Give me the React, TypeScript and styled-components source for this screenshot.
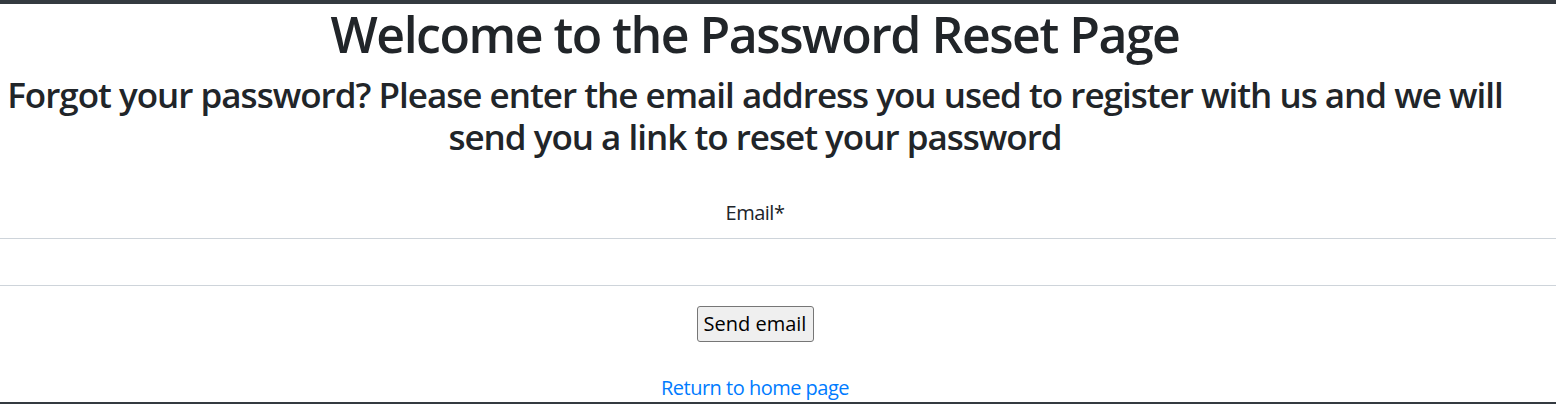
import React from "react";
import styled, { createGlobalStyle } from "styled-components";

const GlobalStyle = createGlobalStyle`
  html, body {
    margin: 0;
    padding: 0;
    background: #fff;
  }
  body {
    font-family: "Segoe UI", "Open Sans", "Noto Sans", Arial, sans-serif;
    font-size: 20px;
    line-height: 1.5;
    letter-spacing: -0.5px;
    color: #212529;
    overflow: hidden;
  }
  * { box-sizing: border-box; }
`;

const Page = styled.div`
  display: flex;
  flex-direction: column;
  height: 404px;
`;

const TopBar = styled.div`
  height: 4px;
  flex: none;
  background: #343a40;
`;

const Main = styled.main`
  width: 1510px;
  text-align: center;
  flex: 1;
`;

const Title = styled.h1`
  margin: 0 0 10px;
  font-size: 50px;
  font-weight: 600;
  line-height: 60px;
  letter-spacing: -1.5px;
`;

const Subtitle = styled.h2`
  margin: 0 0 10px;
  font-size: 35px;
  font-weight: 600;
  line-height: 42px;
  letter-spacing: -1px;
`;

const Form = styled.form`
  margin-top: 40px;
  display: flex;
  flex-direction: column;
  align-items: center;
`;

const Label = styled.label`
  display: block;
  margin-bottom: 10px;
  line-height: 30px;
`;

const Input = styled.input`
  display: block;
  width: 1556px;
  height: 48px;
  margin: 0;
  padding: 7px 15px;
  font: inherit;
  color: #495057;
  background: #fff;
  border: 1px solid #ced4da;
  border-left: none;
  border-right: none;
  outline: none;
  align-self: flex-start;
`;

const Button = styled.button`
  margin-top: 20px;
  width: 117px;
  height: 36px;
  padding: 0;
  font: inherit;
  line-height: 1;
  white-space: nowrap;
  color: #000;
  background: #efefef;
  border: 1px solid #767676;
  border-radius: 3px;
`;

const HomeLink = styled.a`
  display: inline-block;
  margin-top: 30px;
  padding-top: 2px;
  color: #007bff;
  text-decoration: none;
  line-height: 28px;
`;

const Footer = styled.footer`
  flex: none;
  height: 2px;
  background: #343a40;
`;

export default function App() {
  return (
    <>
      <GlobalStyle />
      <Page>
        <TopBar />
        <Main>
          <Title>Welcome to the Password Reset Page</Title>
          <Subtitle>
            Forgot your password? Please enter the email address you used to register with us and we will send you a link to reset your password
          </Subtitle>
          <Form onSubmit={(e) => e.preventDefault()}>
            <Label htmlFor="email">Email*</Label>
            <Input id="email" type="email" />
            <Button type="submit">Send email</Button>
            <HomeLink href="#">Return to home page</HomeLink>
          </Form>
        </Main>
        <Footer />
      </Page>
    </>
  );
}
